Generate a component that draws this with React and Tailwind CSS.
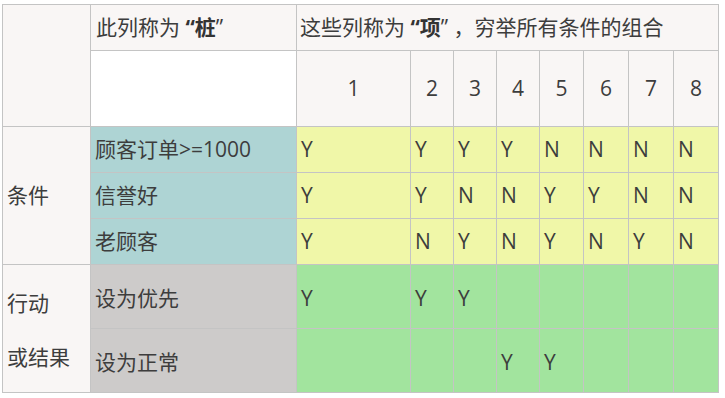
import React from "react";

const conditions = [
  { label: "顾客订单>=1000", values: ["Y", "Y", "Y", "Y", "N", "N", "N", "N"] },
  { label: "信誉好", values: ["Y", "Y", "N", "N", "Y", "Y", "N", "N"] },
  { label: "老顾客", values: ["Y", "N", "Y", "N", "Y", "N", "Y", "N"] },
];

const actions = [
  { label: "设为优先", values: ["Y", "Y", "Y", "", "", "", "", ""] },
  { label: "设为正常", values: ["", "", "", "Y", "Y", "", "", ""] },
];

function App() {
  return (
    <div className="min-h-screen bg-white pl-[2px] pt-[4px] font-['Open_Sans','Noto_Sans_CJK_SC',sans-serif] text-[21px] text-[#3d3d3d] [text-spacing-trim:space-all]">
      <div className="grid w-fit grid-cols-[87px_205px_113px_42px_42px_42px_43px_44px_44px_44px] grid-rows-[45px_75px_45px_45px_45px_63px_63px] gap-px bg-[#c4c4c4] p-px">
        {/* header */}
        <div className="row-span-2 bg-[#f9f6f5]"></div>
        <div className="flex items-center whitespace-nowrap bg-[#f9f6f5] pl-[5px]">
          此列称为&nbsp;<b className="font-bold text-[#333]">“桩</b>”
        </div>
        <div className="col-span-8 flex items-center whitespace-nowrap bg-[#f9f6f5] pl-[3px]">
          这些列称为&nbsp;<b className="font-bold text-[#333]">“项</b>” ，穷举所有条件的组合
        </div>

        <div className="bg-white"></div>
        {[1, 2, 3, 4, 5, 6, 7, 8].map((n) => (
          <div key={n} className="flex items-center justify-center bg-[#f9f6f5]">
            {n}
          </div>
        ))}

        {/* conditions */}
        <div className="row-span-3 flex items-center bg-[#f9f6f5] pl-1">条件</div>
        {conditions.map((row) => (
          <React.Fragment key={row.label}>
            <div className="flex items-center whitespace-nowrap bg-[#aed4d4] pl-1">{row.label}</div>
            {row.values.map((v, i) => (
              <div key={i} className="flex items-center bg-[#f0f7a8] pl-1">
                {v}
              </div>
            ))}
          </React.Fragment>
        ))}

        {/* actions */}
        <div className="row-span-2 flex flex-col justify-center bg-[#f9f6f5] pl-1 pt-[2px] leading-[54px]">
          <div>行动</div>
          <div>或结果</div>
        </div>
        {actions.map((row) => (
          <React.Fragment key={row.label}>
            <div className="flex items-center bg-[#cdcbca] pl-1 pt-1">{row.label}</div>
            {row.values.map((v, i) => (
              <div key={i} className="flex items-center bg-[#a2e49e] pl-1 pt-1">
                {v}
              </div>
            ))}
          </React.Fragment>
        ))}
      </div>
    </div>
  );
}

export default App;
